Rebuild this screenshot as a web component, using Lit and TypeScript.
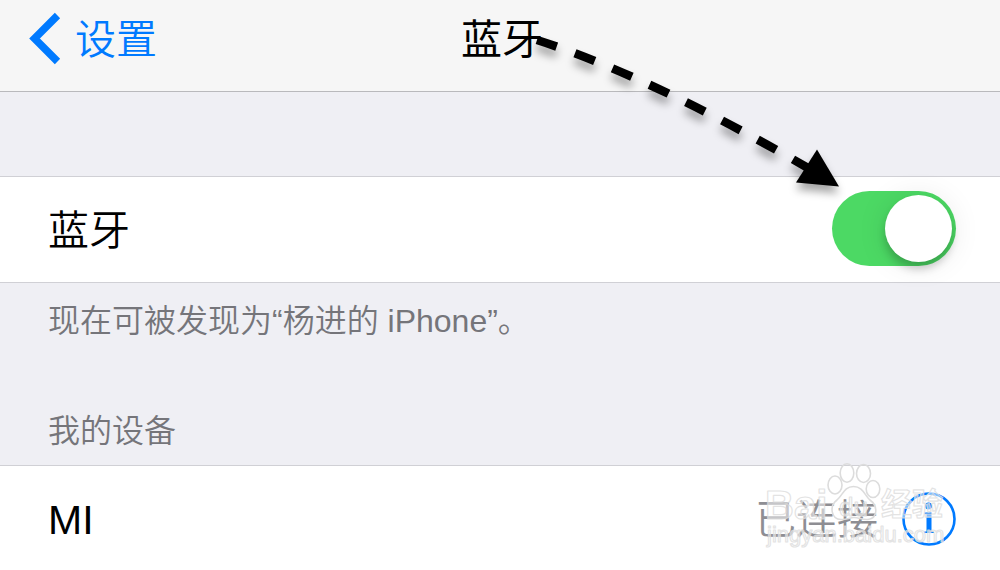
import { LitElement, html, css, svg } from "lit";
import { customElement, property, state } from "lit/decorators.js";

@customElement("nav-bar")
class NavBar extends LitElement {
  @property() heading = "";
  @property() back = "";

  static styles = css`
    :host {
      display: block;
    }
    .bar {
      display: grid;
      grid-template-columns: 1fr auto 1fr;
      align-items: center;
      box-sizing: border-box;
      height: 92px;
      padding: 0 24px 12px 28px;
      background: #f6f6f6;
      border-bottom: 1px solid #b9b9bc;
    }
    .back {
      display: flex;
      align-items: center;
      justify-self: start;
      gap: 13px;
      color: #007aff;
      text-decoration: none;
      font-weight: 350;
    }
    .chevron {
      display: block;
      width: 34px;
      height: 52px;
      overflow: visible;
    }
    .title {
      margin: 0;
      font-size: inherit;
      font-weight: 400;
    }
  `;

  render() {
    return html`
      <header class="bar">
        <a class="back" href="#settings">
          <svg class="chevron" viewBox="0 0 34 52" aria-hidden="true">
            <path d="M29.500 1.500L6.500 24.500L29.500 47.500" fill="none" stroke="currentColor" stroke-width="7.500" />
          </svg>
          <span>${this.back}</span>
        </a>
        <h1 class="title">${this.heading}</h1>
      </header>
    `;
  }
}

@customElement("pointer-arrow")
class PointerArrow extends LitElement {
  static styles = css`
    :host {
      display: block;
    }
    .art {
      display: block;
      width: 320px;
      height: 170px;
      overflow: visible;
      filter: drop-shadow(0 7px 4px rgba(0, 0, 0, 0.35));
    }
  `;

  render() {
    return html`
      <svg class="art" viewBox="530 30 320 170" aria-hidden="true">
        <path d="M537 40Q649 76 808 168" fill="none" stroke="#000" stroke-width="8.600" stroke-dasharray="21 19.450" />
        <path d="M817 149.500L839 186.500L796 182.500Z" />
      </svg>
    `;
  }
}

@customElement("site-watermark")
class SiteWatermark extends LitElement {
  static styles = css`
    :host {
      display: block;
    }
    .art {
      display: block;
      width: 190px;
      height: 100px;
      font-family: "Liberation Sans", "Noto Sans CJK SC", sans-serif;
    }
    .ink {
      fill: #fff;
      fill-opacity: 0.5;
      stroke: #dcdcdc;
      stroke-opacity: 0.8;
      stroke-width: 1.2;
      stroke-linejoin: round;
    }
    .paw {
      fill: none;
      stroke: #dcdcdc;
      stroke-width: 1.6;
    }
    .word {
      font-size: 40px;
      font-weight: 700;
    }
    .inner {
      font-size: 26px;
    }
    .han {
      font-size: 31px;
      font-weight: 700;
    }
    .url {
      font-size: 22px;
    }
  `;

  render() {
    const toes = [
      [847, 473, 6.8, 9.3],
      [863.5, 473.5, 7, 9],
      [835, 485, 7, 9],
      [873, 489, 6.8, 8.5],
    ];
    return html`
      <svg class="art" viewBox="760 455 190 100" aria-hidden="true">
        <g class="paw">
          ${toes.map(([x, y, rx, ry]) => svg`<ellipse cx=${x} cy=${y} rx=${rx} ry=${ry} />`)}
          <path d="M853.500 486.500C844 486.500 843 495 837 500C829 506 831 519 841 519.500C846 520 850 517.500 854 517.500C859 517.500 862 520 868 519.500C878 518 878 506 870 500C865 496 863 486.500 853.500 486.500Z" />
        </g>
        <g class="ink">
          <text class="word" x="765" y="519">Bai</text>
          <text class="inner" x="839" y="516">du</text>
          <text class="han" x="881" y="515">经验</text>
          <text class="url" x="767" y="542">jingyan.baidu.com</text>
        </g>
      </svg>
    `;
  }
}

@customElement("app-root")
class AppRoot extends LitElement {
  @state() private enabled = true;

  static styles = css`
    :host {
      display: block;
      position: relative;
      min-height: 100vh;
      overflow: hidden;
      background: #efeff4;
      color: #000;
      font-family: "Liberation Sans", "Noto Sans CJK SC", sans-serif;
      font-size: 41px;
      line-height: 60px;
    }
    .content {
      display: flex;
      flex-direction: column;
      padding-top: 84px;
    }
    .row {
      display: flex;
      align-items: center;
      justify-content: space-between;
      box-sizing: border-box;
      height: 107px;
      padding: 0 44px 0 48px;
      background: #fff;
      border-top: 1px solid #d0d0d5;
      border-bottom: 1px solid #d0d0d5;
      font-weight: 350;
    }
    .text {
      padding-top: 3px;
    }
    .note,
    .section {
      margin: 0;
      padding: 0 48px;
      color: #75757a;
      font-size: 32px;
      font-weight: 350;
      line-height: 46px;
    }
    .note {
      padding-top: 15px;
    }
    .section {
      padding-top: 64px;
      padding-bottom: 11px;
    }
    .switch {
      appearance: none;
      display: flex;
      align-items: center;
      justify-content: flex-start;
      box-sizing: border-box;
      width: 124px;
      height: 75px;
      margin: 0 0 2px;
      padding: 4px;
      border-radius: 38px;
      background: #e5e5ea;
      cursor: pointer;
    }
    .switch:checked {
      justify-content: flex-end;
      background: #4cd964;
    }
    .switch::before {
      content: "";
      width: 67px;
      height: 67px;
      border-radius: 50%;
      background: #fff;
      box-shadow: 0 7px 8px rgba(0, 0, 0, 0.2), 0 2px 30px rgba(0, 0, 0, 0.1);
    }
    .status {
      display: flex;
      align-items: center;
      gap: 24px;
      color: #8e8e93;
    }
    .info {
      display: block;
      padding: 0;
      border: 0;
      background: none;
      color: #007aff;
      cursor: pointer;
    }
    .glyph {
      display: block;
      width: 54px;
      height: 54px;
    }
    .arrow {
      position: absolute;
      top: 30px;
      left: 53%;
      pointer-events: none;
    }
    .mark {
      position: absolute;
      top: 455px;
      right: 50px;
      pointer-events: none;
    }
  `;

  private toggle(e: Event) {
    this.enabled = (e.target as HTMLInputElement).checked;
  }

  render() {
    return html`
      <nav-bar heading="蓝牙" back="设置"></nav-bar>
      <main class="content">
        <div class="row">
          <label class="text" for="bluetooth">蓝牙</label>
          <input class="switch" id="bluetooth" type="checkbox" role="switch" .checked=${this.enabled} @change=${this.toggle} />
        </div>
        <p class="note">现在可被发现为“杨进的 iPhone”。</p>
        <h2 class="section">我的设备</h2>
        <div class="row">
          <span class="text">MI</span>
          <div class="status">
            <span class="text">已连接</span>
            <button class="info" type="button" aria-label="MI 详细信息">
              <svg class="glyph" viewBox="0 0 54 54" aria-hidden="true">
                <circle cx="27" cy="27" r="25.500" fill="none" stroke="currentColor" stroke-width="2.600" />
                <circle cx="26.500" cy="14" r="3.400" fill="currentColor" />
                <path d="M22.500 20.500H29.500V39.500H32V41H22V39.500H24.500V22H22.500Z" fill="currentColor" />
              </svg>
            </button>
          </div>
        </div>
      </main>
      <pointer-arrow class="arrow"></pointer-arrow>
      <site-watermark class="mark"></site-watermark>
    `;
  }
}
